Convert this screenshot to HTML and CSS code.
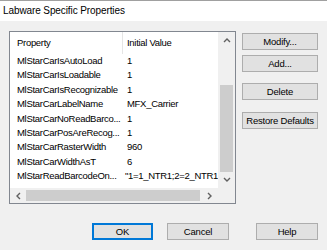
FILE: index.html
```html
<!DOCTYPE html>
<html lang="en">
  <head>
    <meta name="viewport" content="width=device-width, initial-scale=1">
    <link rel="stylesheet" href="styles.css">
  </head>
  <body>
    <div class="dialog">
      <div class="titlebar">Labware Specific Properties</div>
      <div class="content">
        <div class="list">
          <div class="table">
            <div class="row header">
              <div class="cell name">Property</div>
              <div class="cell value">Initial Value</div>
            </div>
            <div class="row"><div class="cell name">MlStarCarIsAutoLoad</div><div class="cell value">1</div></div>
            <div class="row"><div class="cell name">MlStarCarIsLoadable</div><div class="cell value">1</div></div>
            <div class="row"><div class="cell name">MlStarCarIsRecognizable</div><div class="cell value">1</div></div>
            <div class="row"><div class="cell name">MlStarCarLabelName</div><div class="cell value">MFX_Carrier</div></div>
            <div class="row"><div class="cell name">MlStarCarNoReadBarco...</div><div class="cell value">1</div></div>
            <div class="row"><div class="cell name">MlStarCarPosAreRecog...</div><div class="cell value">1</div></div>
            <div class="row"><div class="cell name">MlStarCarRasterWidth</div><div class="cell value">960</div></div>
            <div class="row"><div class="cell name">MlStarCarWidthAsT</div><div class="cell value">6</div></div>
            <div class="row"><div class="cell name">MlStarReadBarcodeOn...</div><div class="cell value">"1=1_NTR1;2=2_NTR1</div></div>
          </div>
          <div class="vscroll">
            <div class="arrow">
              <svg width="8" height="6" viewBox="0 0 8 6"><polyline points="1,5 4,2 7,5" /></svg>
            </div>
            <div class="track">
              <div class="thumb"></div>
            </div>
            <div class="arrow">
              <svg width="8" height="6" viewBox="0 0 8 6"><polyline points="1,1 4,4 7,1" /></svg>
            </div>
          </div>
          <div class="hscroll">
            <div class="arrow">
              <svg width="6" height="8" viewBox="0 0 6 8"><polyline points="5,1 2,4 5,7" /></svg>
            </div>
            <div class="track">
              <div class="thumb"></div>
            </div>
            <div class="arrow">
              <svg width="6" height="8" viewBox="0 0 6 8"><polyline points="1,1 4,4 1,7" /></svg>
            </div>
          </div>
          <div class="corner"></div>
        </div>
        <div class="side">
          <button class="btn modify">Modify...</button>
          <button class="btn add">Add...</button>
          <button class="btn delete">Delete</button>
          <button class="btn restore">Restore Defaults</button>
        </div>
      </div>
      <div class="footer">
        <button class="btn ok">OK</button>
        <button class="btn cancel">Cancel</button>
        <button class="btn help">Help</button>
      </div>
    </div>
  </body>
</html>
```
FILE: styles.css
```css
body {
  margin: 0;
  background: #f0f0f0;
  font-family: "Liberation Sans", Arial, sans-serif;
  color: #000000;
}
.dialog {
  width: 327px;
  height: 250px;
  display: flex;
  flex-direction: column;
  background: #f0f0f0;
  border-top: 1px solid #a0a0a0;
  box-sizing: border-box;
}
.titlebar {
  height: 20px;
  line-height: 20px;
  padding-left: 3px;
  background: #ffffff;
  font-size: 10px;
  letter-spacing: -0.1px;
}
.content {
  display: flex;
  padding: 10px 9px 0 9px;
}

/* list view */
.list {
  width: 227px;
  height: 173px;
  box-sizing: border-box;
  border: 1px solid #828790;
  background: #ffffff;
  display: grid;
  grid-template-columns: 208px 17px;
  grid-template-rows: 156px 15px;
  font-size: 9.5px;
  letter-spacing: -0.3px;
}
.table {
  overflow: hidden;
}
.row {
  display: flex;
  height: 14.4px;
  line-height: 14.4px;
  white-space: nowrap;
}
.row.header {
  height: 22px;
  line-height: 22px;
}
.cell.name {
  width: 112px;
  padding-left: 7px;
  box-sizing: border-box;
  overflow: hidden;
}
.cell.value {
  padding-left: 5px;
}
.row.header .cell.value {
  border-left: 1px solid #e5e5e5;
  padding-left: 4px;
}

.vscroll,
.hscroll,
.corner {
  background: #f0f0f0;
}
.vscroll {
  display: flex;
  flex-direction: column;
}
.vscroll .arrow {
  height: 16px;
}
.vscroll .track {
  flex: 1;
  display: flex;
  flex-direction: column;
  padding: 37px 2px 0 2px;
}
.vscroll .thumb {
  flex: 1;
  background: #cdcdcd;
}
.hscroll {
  display: flex;
}
.hscroll .arrow {
  width: 16px;
}
.hscroll .track {
  flex: 1;
  display: flex;
  padding: 2px 0;
}
.hscroll .thumb {
  width: 174px;
  background: #cdcdcd;
}
.arrow {
  display: flex;
  align-items: center;
  justify-content: center;
}
.arrow svg polyline {
  fill: none;
  stroke: #606060;
  stroke-width: 1.4;
}

/* buttons */
.btn {
  height: 17px;
  padding: 0;
  margin: 0;
  box-sizing: border-box;
  background: #e1e1e1;
  border: 1px solid #adadad;
  font-family: inherit;
  font-size: 9.5px;
  letter-spacing: -0.2px;
  color: #000000;
}
.side {
  display: flex;
  flex-direction: column;
  margin-left: 6px;
  width: 76px;
}
.side .btn {
  width: 76px;
}
.modify {
  margin-top: 2px;
}
.side .add {
  margin-top: 5px;
}
.side .delete {
  margin-top: 11px;
}
.side .restore {
  margin-top: 12px;
}
.footer {
  display: flex;
  justify-content: flex-end;
  padding: 19px 9px 0 0;
}
.ok {
  width: 61px;
  margin-right: 14px;
  border: 2px solid #0078d7;
}
.cancel {
  width: 62px;
  margin-right: 27px;
}
.help {
  width: 62px;
}
```
